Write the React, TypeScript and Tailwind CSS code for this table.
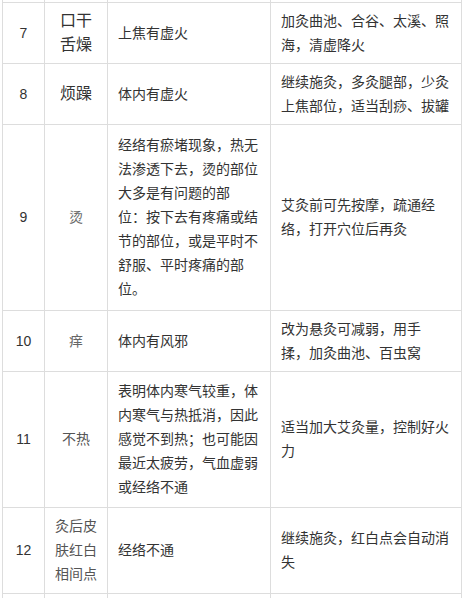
const rows: { no: string; sym: React.ReactNode; symCls: string; cause: React.ReactNode; fix: React.ReactNode; h: string }[] = [
  {
    no: '7',
    sym: <>口干<br />舌燥</>,
    symCls: 'text-[16px]',
    cause: '上焦有虚火',
    fix: <>加灸曲池、合谷、太溪、照<br />海，清虚降火</>,
    h: 'h-[61px]',
  },
  {
    no: '8',
    sym: '烦躁',
    symCls: 'text-[16px]',
    cause: '体内有虚火',
    fix: <>继续施灸，多灸腿部，少灸<br />上焦部位，适当刮痧、拔罐</>,
    h: 'h-[61px]',
  },
  {
    no: '9',
    sym: '烫',
    symCls: 'text-[14px] text-[#666]',
    cause: (
      <>
        经络有瘀堵现象，热无<br />法渗透下去，烫的部位<br />大多是有问题的部<br />位：按下去有疼痛或结<br />节的部位，或是平时不<br />舒服、平时疼痛的部<br />位。
      </>
    ),
    fix: <>艾灸前可先按摩，疏通经<br />络，打开穴位后再灸</>,
    h: 'h-[186px]',
  },
  {
    no: '10',
    sym: '痒',
    symCls: 'text-[14px] text-[#666]',
    cause: '体内有风邪',
    fix: <>改为悬灸可减弱，用手<br />揉，加灸曲池、百虫窝</>,
    h: 'h-[61px]',
  },
  {
    no: '11',
    sym: '不热',
    symCls: 'text-[14px] text-[#555]',
    cause: (
      <>
        表明体内寒气较重，体<br />内寒气与热抵消，因此<br />感觉不到热；也可能因<br />最近太疲劳，气血虚弱<br />或经络不通
      </>
    ),
    fix: <>适当加大艾灸量，控制好火<br />力</>,
    h: 'h-[136px]',
  },
  {
    no: '12',
    sym: <>灸后皮<br />肤红白<br />相间点</>,
    symCls: 'text-[14px] text-[#555]',
    cause: '经络不通',
    fix: <>继续施灸，红白点会自动消<br />失</>,
    h: 'h-[86px]',
  },
];

const td = 'border border-[#dddddd] px-[10px] py-[6px] align-middle';

export default function App() {
  return (
    <div className="h-[598px] w-[465px] overflow-hidden bg-white pl-[2px]">
      <table
        className="w-[459px] table-fixed border-collapse text-[14px] leading-[24px] text-[#333]"
        style={{ fontFamily: '"Liberation Sans", "Noto Sans CJK SC", sans-serif' }}
      >
        <colgroup>
          <col className="w-[42px]" />
          <col className="w-[63px]" />
          <col className="w-[163px]" />
          <col className="w-[191px]" />
        </colgroup>
        <tbody>
          <tr className="h-[2px]">
            <td className="border-x border-[#dddddd] p-0" />
            <td className="border-x border-[#dddddd] p-0" />
            <td className="border-x border-[#dddddd] p-0" />
            <td className="border-x border-[#dddddd] p-0" />
          </tr>
          {rows.map((r) => (
            <tr key={r.no} className={r.h}>
              <td className={`${td} px-0 text-center`}>{r.no}</td>
              <td className={`${td} px-[4px] text-center ${r.symCls}`}>{r.sym}</td>
              <td className={td}>{r.cause}</td>
              <td className={td}>{r.fix}</td>
            </tr>
          ))}
          <tr className="h-[30px]">
            <td className={td} />
            <td className={td} />
            <td className={td} />
            <td className={td} />
          </tr>
        </tbody>
      </table>
    </div>
  );
}
